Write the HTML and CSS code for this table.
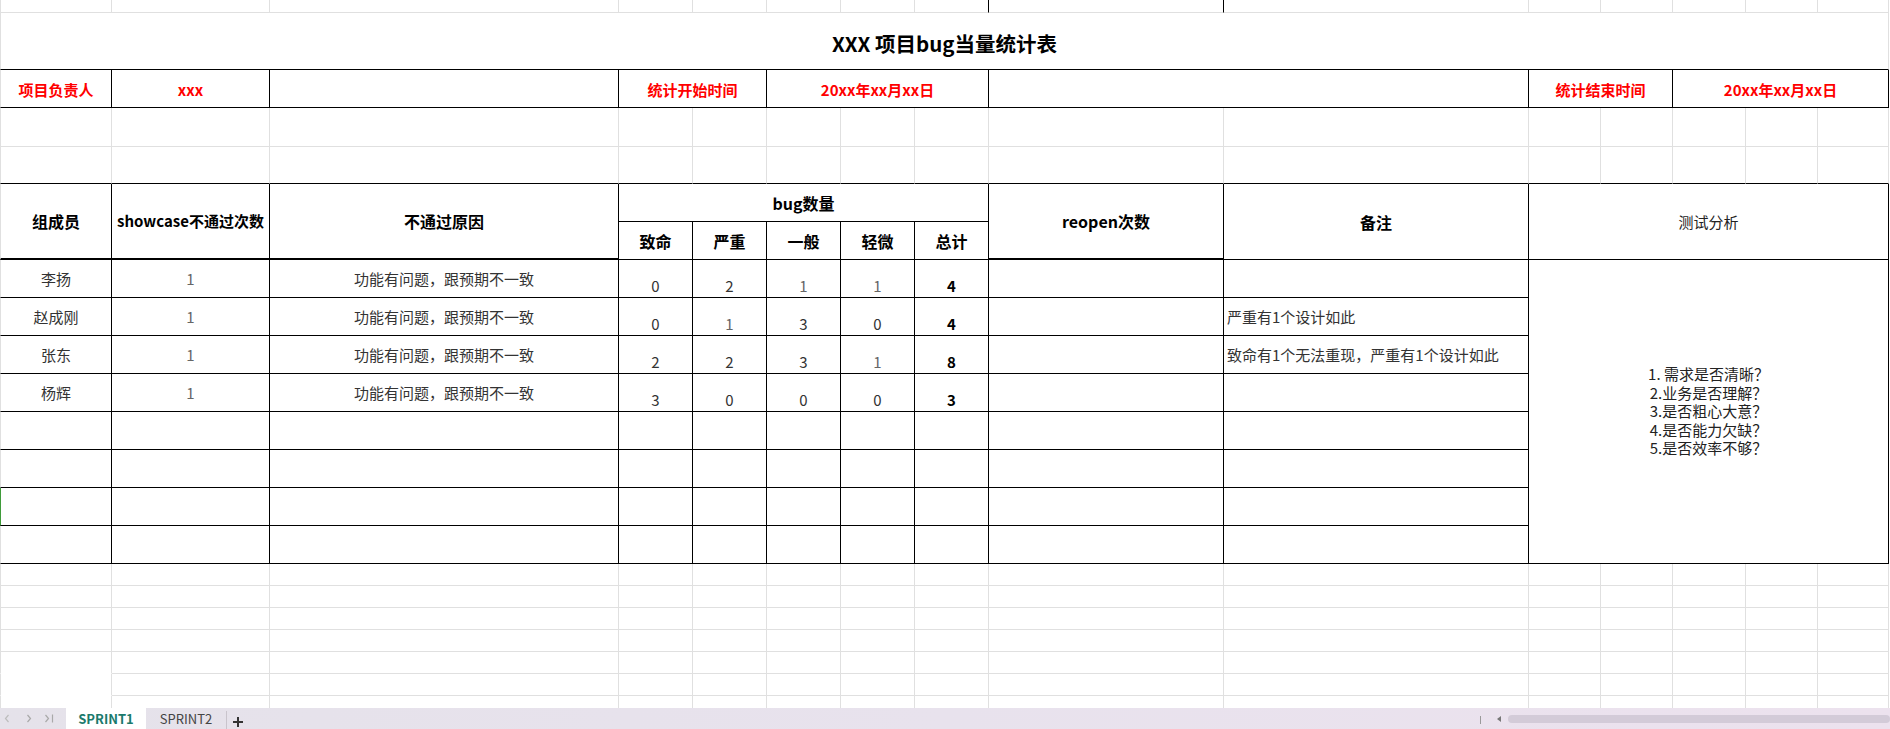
FILE: index.html
```html
<!DOCTYPE html>
<html lang="zh-CN">
<head>
<meta charset="utf-8">
<title>XXX 项目bug当量统计表</title>
<link rel="stylesheet" href="styles.css">
</head>
<body>
<div class="app">
  <div class="sheet">
    <!-- r0 -->
    <div class="c l"></div><div class="c"></div><div class="c"></div><div class="c"></div><div class="c"></div><div class="c"></div><div class="c"></div><div class="c kr"></div><div class="c kr"></div><div class="c"></div><div class="c"></div><div class="c"></div><div class="c"></div><div class="c"></div><div class="c"></div>
    <!-- r1 title -->
    <div class="c l kb sall title">XXX 项目bug当量统计表</div>
    <!-- r2 info -->
    <div class="c l k red info">项目负责人</div>
    <div class="c k red info">xxx</div>
    <div class="c k"></div>
    <div class="c k s2 red info">统计开始时间</div>
    <div class="c k s3 red info">20xx年xx月xx日</div>
    <div class="c k s2"></div>
    <div class="c k s2 red info">统计结束时间</div>
    <div class="c k s3 red info">20xx年xx月xx日</div>
    <!-- r3 -->
    <div class="c l"></div><div class="c"></div><div class="c"></div><div class="c"></div><div class="c"></div><div class="c"></div><div class="c"></div><div class="c"></div><div class="c"></div><div class="c"></div><div class="c"></div><div class="c"></div><div class="c"></div><div class="c"></div><div class="c"></div>
    <!-- r4 -->
    <div class="c l kb"></div><div class="c kb"></div><div class="c kb"></div><div class="c kb"></div><div class="c kb"></div><div class="c kb"></div><div class="c kb"></div><div class="c kb"></div><div class="c kb"></div><div class="c kb"></div><div class="c kb"></div><div class="c kb"></div><div class="c kb"></div><div class="c kb"></div><div class="c kb"></div>
    <!-- header -->
    <div class="c l k r2 tb hd">组成员</div>
    <div class="c k r2 tb hd narrow">showcase不通过次数</div>
    <div class="c k r2 tb hd">不通过原因</div>
    <div class="c k s5 hd">bug数量</div>
    <div class="c k r2 tb hd">reopen次数</div>
    <div class="c k r2 hd">备注</div>
    <div class="c k r2 s5 hn">测试分析</div>
    <div class="c k hd">致命</div>
    <div class="c k hd">严重</div>
    <div class="c k hd">一般</div>
    <div class="c k hd">轻微</div>
    <div class="c k hd">总计</div>
    <!-- d1 -->
    <div class="c l k">李扬</div>
    <div class="c k one">1</div>
    <div class="c k">功能有问题，跟预期不一致</div>
    <div class="c k n">0</div><div class="c k n">2</div><div class="c k n one">1</div><div class="c k n one">1</div><div class="c k n tot">4</div>
    <div class="c k"></div>
    <div class="c k rm"></div>
    <div class="c k r8 s5 an">
      <span>1. 需求是否清晰？</span>
      <span>2.业务是否理解？</span>
      <span>3.是否粗心大意？</span>
      <span>4.是否能力欠缺？</span>
      <span>5.是否效率不够？</span>
    </div>
    <!-- d2 -->
    <div class="c l k">赵成刚</div>
    <div class="c k one">1</div>
    <div class="c k">功能有问题，跟预期不一致</div>
    <div class="c k n">0</div><div class="c k n one">1</div><div class="c k n">3</div><div class="c k n">0</div><div class="c k n tot">4</div>
    <div class="c k"></div>
    <div class="c k rm">严重有1个设计如此</div>
    <!-- d3 -->
    <div class="c l k">张东</div>
    <div class="c k one">1</div>
    <div class="c k">功能有问题，跟预期不一致</div>
    <div class="c k n">2</div><div class="c k n">2</div><div class="c k n">3</div><div class="c k n one">1</div><div class="c k n tot">8</div>
    <div class="c k"></div>
    <div class="c k rm">致命有1个无法重现，严重有1个设计如此</div>
    <!-- d4 -->
    <div class="c l k">杨辉</div>
    <div class="c k one">1</div>
    <div class="c k">功能有问题，跟预期不一致</div>
    <div class="c k n">3</div><div class="c k n">0</div><div class="c k n">0</div><div class="c k n">0</div><div class="c k n tot">3</div>
    <div class="c k"></div>
    <div class="c k rm"></div>
    <!-- d5 -->
    <div class="c l k"></div><div class="c k"></div><div class="c k"></div><div class="c k"></div><div class="c k"></div><div class="c k"></div><div class="c k"></div><div class="c k"></div><div class="c k"></div><div class="c k"></div>
    <!-- d6 -->
    <div class="c l k"></div><div class="c k"></div><div class="c k"></div><div class="c k"></div><div class="c k"></div><div class="c k"></div><div class="c k"></div><div class="c k"></div><div class="c k"></div><div class="c k"></div>
    <!-- d7 -->
    <div class="c l k sel"></div><div class="c k"></div><div class="c k"></div><div class="c k"></div><div class="c k"></div><div class="c k"></div><div class="c k"></div><div class="c k"></div><div class="c k"></div><div class="c k"></div>
    <!-- d8 -->
    <div class="c l k"></div><div class="c k"></div><div class="c k"></div><div class="c k"></div><div class="c k"></div><div class="c k"></div><div class="c k"></div><div class="c k"></div><div class="c k"></div><div class="c k"></div>
    <!-- below rows -->
    <div class="c l"></div><div class="c"></div><div class="c"></div><div class="c"></div><div class="c"></div><div class="c"></div><div class="c"></div><div class="c"></div><div class="c"></div><div class="c"></div><div class="c"></div><div class="c"></div><div class="c"></div><div class="c"></div><div class="c"></div>
    <div class="c l"></div><div class="c"></div><div class="c"></div><div class="c"></div><div class="c"></div><div class="c"></div><div class="c"></div><div class="c"></div><div class="c"></div><div class="c"></div><div class="c"></div><div class="c"></div><div class="c"></div><div class="c"></div><div class="c"></div>
    <div class="c l"></div><div class="c"></div><div class="c"></div><div class="c"></div><div class="c"></div><div class="c"></div><div class="c"></div><div class="c"></div><div class="c"></div><div class="c"></div><div class="c"></div><div class="c"></div><div class="c"></div><div class="c"></div><div class="c"></div>
    <div class="c l"></div><div class="c"></div><div class="c"></div><div class="c"></div><div class="c"></div><div class="c"></div><div class="c"></div><div class="c"></div><div class="c"></div><div class="c"></div><div class="c"></div><div class="c"></div><div class="c"></div><div class="c"></div><div class="c"></div>
    <div class="c l nb"></div><div class="c"></div><div class="c"></div><div class="c"></div><div class="c"></div><div class="c"></div><div class="c"></div><div class="c"></div><div class="c"></div><div class="c"></div><div class="c"></div><div class="c"></div><div class="c"></div><div class="c"></div><div class="c"></div>
    <div class="c l nb"></div><div class="c"></div><div class="c"></div><div class="c"></div><div class="c"></div><div class="c"></div><div class="c"></div><div class="c"></div><div class="c"></div><div class="c"></div><div class="c"></div><div class="c"></div><div class="c"></div><div class="c"></div><div class="c"></div>
    <div class="c l"></div><div class="c"></div><div class="c"></div><div class="c"></div><div class="c"></div><div class="c"></div><div class="c"></div><div class="c"></div><div class="c"></div><div class="c"></div><div class="c"></div><div class="c"></div><div class="c"></div><div class="c"></div><div class="c"></div>
  </div>

  <div class="tabs">
    <div class="nav">
      <svg width="66" height="21" viewBox="0 0 66 21">
        <polyline points="8.5,7 5.5,10.5 8.5,14" fill="none" stroke="#bdbdbd" stroke-width="1.2"/>
        <polyline points="27.5,7 30.5,10.5 27.5,14" fill="none" stroke="#a9a9a9" stroke-width="1.2"/>
        <polyline points="45.5,7 48.5,10.5 45.5,14" fill="none" stroke="#a9a9a9" stroke-width="1.2"/>
        <line x1="52.5" y1="6.5" x2="52.5" y2="14.5" stroke="#a9a9a9" stroke-width="1.2"/>
      </svg>
    </div>
    <div class="tab on">SPRINT1</div>
    <div class="tab">SPRINT2</div>
    <div class="sep"></div>
    <div class="plus">
      <svg width="22" height="21" viewBox="0 0 22 21">
        <line x1="6" y1="14" x2="16" y2="14" stroke="#333" stroke-width="2"/>
        <line x1="11" y1="9" x2="11" y2="19" stroke="#333" stroke-width="2"/>
      </svg>
    </div>
    <div class="hs">
      <span class="grip"></span>
      <svg class="tri" width="8" height="21" viewBox="0 0 8 21">
        <polygon points="2,11 6,8 6,14" fill="#777"/>
      </svg>
      <div class="thumb"></div>
    </div>
  </div>
</div>
</body>
</html>
```

FILE: styles.css
```css
:root {
  --g: #e0e0e0;
}
* {
  box-sizing: border-box;
}
html, body {
  margin: 0;
  padding: 0;
  background: #fff;
}
body {
  width: 1890px;
  height: 729px;
  overflow: hidden;
  font-family: "Noto Sans CJK SC", "Liberation Sans", sans-serif;
  color: #333;
}
.app {
  display: flex;
  flex-direction: column;
  height: 729px;
}
.sheet {
  flex: none;
  display: grid;
  grid-template-columns: 112px 158px 349px 74px 74px 74px 74px 74px 235px 305px 72px 72px 73px 72px 71px;
  grid-template-rows: 13px 57px 38px 39px 37px 38px 38px repeat(8, 38px) repeat(7, 22px);
  height: 708px;
  overflow: hidden;
}
.c {
  min-width: 0;
  border-right: 1px solid var(--g);
  border-bottom: 1px solid var(--g);
  display: flex;
  align-items: center;
  justify-content: center;
  white-space: nowrap;
  overflow: hidden;
  font-size: 15px;
  line-height: 18px;
}
.l { border-left: 1px solid var(--g); }
.kr { border-right-color: #000; }
.kb { border-bottom-color: #000; }
.k { border-right-color: #000; border-bottom-color: #000; }
.tb { border-bottom-width: 2px; }
.nb { border-bottom-color: #fff; }
.sel { border-left-color: #3f9b3a; }
.s2 { grid-column: span 2; }
.s3 { grid-column: span 3; }
.s5 { grid-column: span 5; }
.sall { grid-column: 1 / -1; }
.r2 { grid-row: span 2; }
.r8 { grid-row: span 8; }

.title {
  font-size: 20.5px;
  font-weight: 700;
  color: #000;
  padding-top: 4px;
}
.red {
  color: #ff0000;
  font-weight: 700;
}
.info {
  padding-top: 2px;
}
.hd {
  font-size: 16px;
  font-weight: 700;
  color: #000;
}
.narrow {
  font-size: 15px;
}
.hn {
  font-size: 15px;
  color: #222;
}
.one {
  color: #666;
}
.n {
  align-items: flex-end;
  padding-bottom: 2px;
}
.tot {
  font-weight: 700;
  color: #000;
}
.rm {
  justify-content: flex-start;
  padding-left: 3px;
}
.an {
  flex-direction: column;
  font-size: 15px;
  line-height: 18.5px;
  color: #222;
}
.an span {
  display: block;
}

.tabs {
  flex: none;
  height: 21px;
  display: flex;
  align-items: stretch;
  background: linear-gradient(90deg, #e5e2ea 0%, #e8e2ed 50%, #ece2ee 100%);
}
.nav {
  width: 66px;
  display: flex;
}
.tab {
  width: 80px;
  display: flex;
  align-items: center;
  justify-content: center;
  font-size: 13px;
  color: #444;
}
.tab.on {
  background: #fff;
  color: #1b7a6c;
  font-weight: 700;
}
.sep {
  width: 1px;
  margin: 3px 0 0;
  background: #c9c4cc;
}
.plus {
  width: 22px;
  display: flex;
}
.hs {
  margin-left: auto;
  width: 412px;
  display: flex;
  align-items: center;
}
.grip {
  width: 1px;
  height: 8px;
  margin: 2px 14px 0 2px;
  background: #9a9a9a;
}
.tri {
  margin-right: 5px;
}
.thumb {
  flex: 1;
  height: 8px;
  margin-top: 1px;
  border-radius: 4px;
  background: #d3cbd8;
}
```
